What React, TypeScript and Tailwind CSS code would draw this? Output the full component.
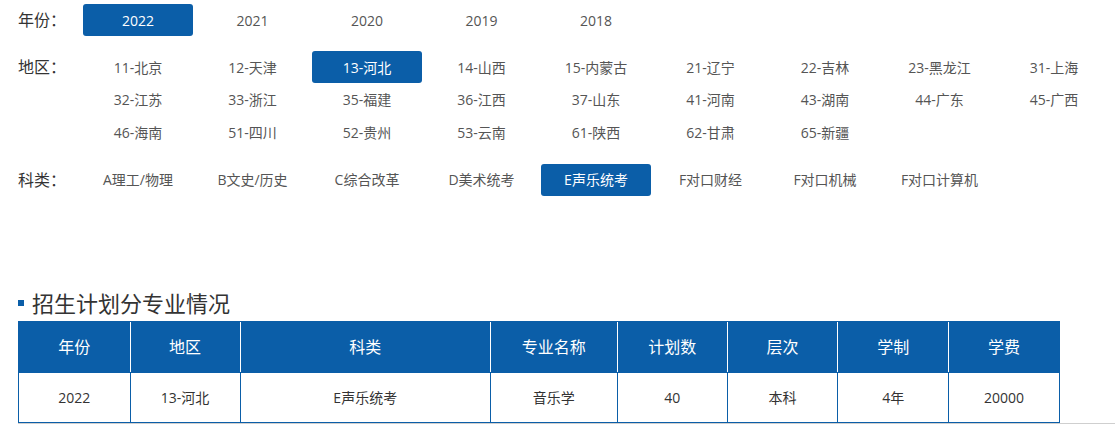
import React from "react"

const years = ["2022", "2021", "2020", "2019", "2018"]
const regions = [
  "11-北京", "12-天津", "13-河北", "14-山西", "15-内蒙古", "21-辽宁", "22-吉林", "23-黑龙江", "31-上海",
  "32-江苏", "33-浙江", "35-福建", "36-江西", "37-山东", "41-河南", "43-湖南", "44-广东", "45-广西",
  "46-海南", "51-四川", "52-贵州", "53-云南", "61-陕西", "62-甘肃", "65-新疆",
]
const kinds = ["A理工/物理", "B文史/历史", "C综合改革", "D美术统考", "E声乐统考", "F对口财经", "F对口机械", "F对口计算机"]

const columns = [
  { title: "年份", width: "w-[111.5px]" },
  { title: "地区", width: "w-[110px]" },
  { title: "科类", width: "w-[250.5px]" },
  { title: "专业名称", width: "w-[126.7px]" },
  { title: "计划数", width: "w-[110px]" },
  { title: "层次", width: "w-[110.6px]" },
  { title: "学制", width: "w-[111px]" },
  { title: "学费", width: "w-[110.4px]" },
]
const row = ["2022", "13-河北", "E声乐统考", "音乐学", "40", "本科", "4年", "20000"]

function FilterRow({ label, items, active }: { label: string; items: string[]; active: string }) {
  return (
    <div className="flex">
      <div className="w-[65px] h-8 shrink-0 flex items-center text-[16px] text-[#333]">{label}</div>
      <div className="w-[1032px] flex flex-wrap gap-y-[0.5px]">
        {items.map(item => (
          <div
            key={item}
            className={`w-[110px] h-8 mr-[4.5px] flex items-center justify-center text-[14px] rounded-[3px] ${
              item === active ? "bg-[#0b5ea8] text-white" : "text-[#555]"
            }`}
          >
            {item}
          </div>
        ))}
      </div>
    </div>
  )
}

export default function App() {
  return (
    <div className="w-[1115px] h-[431px] overflow-hidden bg-white pt-1 pl-[18px] font-['Open_Sans','Noto_Sans_CJK_SC',sans-serif]">
      <div className="flex flex-col">
        <FilterRow label="年份：" items={years} active="2022" />
        <div className="mt-[15px]">
          <FilterRow label="地区：" items={regions} active="13-河北" />
        </div>
        <div className="mt-[15.5px]">
          <FilterRow label="科类：" items={kinds} active="E声乐统考" />
        </div>
      </div>

      {/* 招生计划 */}
      <div className="mt-[91px] flex items-center h-[32px]">
        <span className="w-[6px] h-[6px] bg-[#0b5ea8] mr-2 mt-[1px]" />
        <h2 className="text-[22px] leading-none text-[#333]">招生计划分专业情况</h2>
      </div>
      <div className="mt-[2px] border-b border-[#cfcfcf] w-[1200px]">
        <table className="table-fixed border-collapse w-[1041px] text-center">
          <thead>
            <tr className="bg-[#0b5ea8] h-[51px]">
              {columns.map((c, i) => (
                <th
                  key={c.title}
                  className={`${c.width} font-normal text-[16px] text-white border-y border-[#0b5ea8] ${
                    i === 0 ? "border-l border-l-[#0b5ea8]" : "border-l border-l-white"
                  } ${i === columns.length - 1 ? "border-r border-r-[#0b5ea8]" : ""}`}
                >
                  {c.title}
                </th>
              ))}
            </tr>
          </thead>
          <tbody>
            <tr className="h-[50px]">
              {row.map((v, i) => (
                <td key={i} className="border border-[#0b5ea8] text-[14px] text-[#333]">
                  {v}
                </td>
              ))}
            </tr>
          </tbody>
        </table>
      </div>
    </div>
  )
}
